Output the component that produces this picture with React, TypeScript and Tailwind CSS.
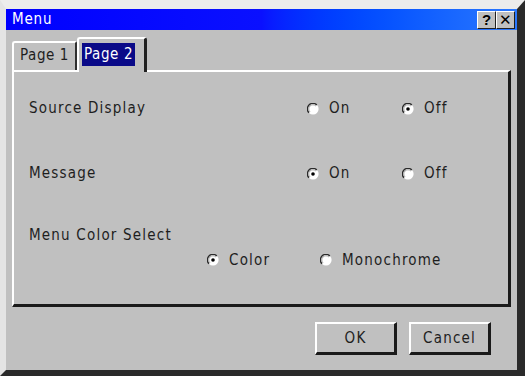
import React from "react";

const Radio = ({ checked }: { checked?: boolean }) => (
  <svg width="12" height="12" viewBox="0 0 12 12" className="shrink-0">
    <circle cx="6" cy="6" r="5.6" fill="#ffffff" />
    <path d="M 9.8 2.0 A 5.3 5.3 0 0 0 2.0 9.8" fill="none" stroke="#2a2a2a" strokeWidth="1.4" />
    <path d="M 8.9 3.0 A 4.1 4.1 0 0 0 3.0 8.9" fill="none" stroke="#8a8a8a" strokeWidth="0.8" />
    {checked && <circle cx="6" cy="6" r="1.8" fill="#000000" />}
  </svg>
);

const Opt = ({ checked, label, w }: { checked?: boolean; label: string; w: string }) => (
  <div className={`flex items-center gap-[10px] ${w}`}>
    <Radio checked={checked} />
    <span>{label}</span>
  </div>
);

export default function App() {
  return (
    <div
      className="w-[525px] h-[376px] overflow-hidden bg-[#c0c0c0] text-[15px] tracking-[1.2px] text-[#1e1e1e] leading-none"
      style={{ fontFamily: '"DejaVu Sans Condensed", "Liberation Sans Narrow", sans-serif' }}
    >
      <div className="w-full h-full flex flex-col border-t-[9px] border-l-[6px] border-r-[8px] border-b-[6px] border-t-[#ececec] border-l-[#e4e4e4] border-r-[#2a2a2a] border-b-[#2a2a2a]">
        {/* Title bar */}
        <div className="h-[21px] flex items-center justify-between pl-[6px] pr-[2px] bg-gradient-to-r from-[#0000ff] via-[#0a10ff] to-[#2a78ff]">
          <span className="text-white text-[15px] tracking-[0.8px]">Menu</span>
          <div className="flex">
            <div className="w-[19px] h-[18px] bg-[#c0c0c0] border-t border-l border-t-white border-l-white border-r border-b border-r-[#202020] border-b-[#202020] flex items-center justify-center font-bold text-[15px] tracking-normal text-black" style={{ fontFamily: '"Liberation Sans", sans-serif' }}>?</div>
            <div className="w-[19px] h-[18px] bg-[#c0c0c0] border-t border-l border-t-white border-l-white border-r border-b border-r-[#202020] border-b-[#202020] flex items-center justify-center text-[15px] tracking-normal text-black" style={{ fontFamily: '"Liberation Sans", sans-serif' }}>✕</div>
          </div>
        </div>

        {/* Body */}
        <div className="flex-1 flex flex-col px-[6px] pt-[7px]">
          {/* Tabs */}
          <div className="flex items-end h-[33px] relative z-10">
            <div className="w-[65px] h-[29px] border-t-2 border-l-2 border-t-white border-l-white border-r-2 border-r-[#303030] rounded-tl-[3px] rounded-tr-[2px] flex items-center justify-center pb-[2px] tracking-[0.6px]">
              Page 1
            </div>
            <div className="w-[70px] h-[35px] -mb-[2px] bg-[#c0c0c0] border-t-2 border-l-2 border-t-white border-l-white border-r-[3px] border-r-[#202020] rounded-tl-[3px] rounded-tr-[3px] flex items-start pl-[3px] pt-[4px]">
              <span className="bg-[#0a0a88] text-white h-[23px] px-[2px] flex items-center tracking-[0.6px]">Page 2</span>
            </div>
          </div>

          {/* Panel */}
          <div className="h-[237px] border-t-2 border-l-2 border-t-white border-l-white border-r-[3px] border-b-[3px] border-r-[#1a1a1a] border-b-[#1a1a1a] flex flex-col pl-[15px]">
            <div className="h-[35px] mt-[19px] flex items-center">
              <span className="w-[278px]">Source Display</span>
              <Opt label="On" w="w-[95px]" />
              <Opt label="Off" checked w="w-[80px]" />
            </div>
            <div className="h-[35px] mt-[30px] flex items-center">
              <span className="w-[278px]">Message</span>
              <Opt label="On" checked w="w-[95px]" />
              <Opt label="Off" w="w-[80px]" />
            </div>
            <div className="h-[20px] mt-[34px] flex items-center">
              <span>Menu Color Select</span>
            </div>
            <div className="h-[20px] mt-[5px] flex items-center pl-[178px]">
              <Opt label="Color" checked w="w-[113px]" />
              <Opt label="Monochrome" w="w-[130px]" />
            </div>
          </div>

          {/* Buttons */}
          <div className="flex justify-end gap-[12px] mt-[15px] pr-[20px]">
            <div className="w-[82px] h-[33px] flex items-center justify-center border-t-2 border-l-2 border-t-white border-l-white border-r-[3px] border-b-[3px] border-r-[#1a1a1a] border-b-[#1a1a1a]">
              OK
            </div>
            <div className="w-[82px] h-[33px] flex items-center justify-center border-t-2 border-l-2 border-t-white border-l-white border-r-[3px] border-b-[3px] border-r-[#1a1a1a] border-b-[#1a1a1a]">
              Cancel
            </div>
          </div>
        </div>
      </div>
    </div>
  );
}
